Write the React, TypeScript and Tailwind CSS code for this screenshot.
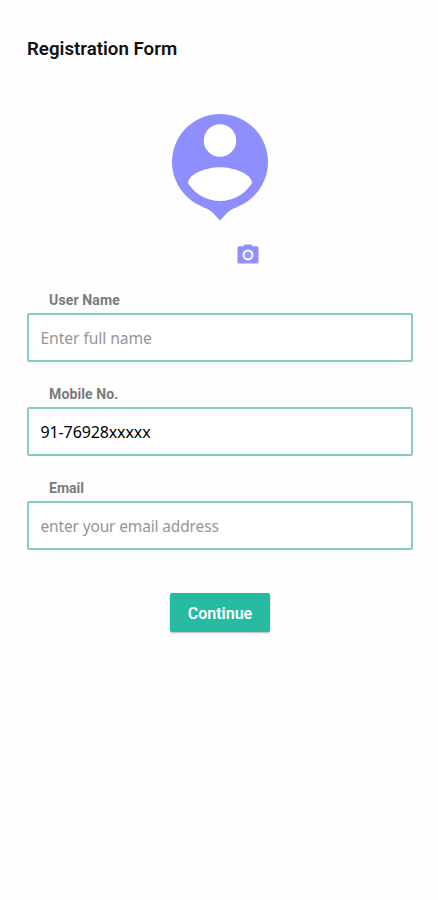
import React from "react";

function Avatar() {
  return (
    <svg className="h-[107px] w-[98px]" viewBox="0 0 98 107" aria-hidden="true">
      <circle cx="49" cy="48" r="48" fill="#8f8eff" />
      <path d="M30 92.5Q37.5 94.5 41.5 98.5L49 106.5L56.5 98.5Q60.500 94.5 68 92.500Z" fill="#8f8eff" />
      <circle cx="49" cy="26.5" r="16.2" fill="#fff" />
      <path d="M17 69C17.500 59 37 53.200 49 53.200S80.500 59 81 69C74 80.500 62 87 49 87S24 80.500 17 69Z" fill="#fff" />
    </svg>
  );
}

function Camera() {
  return (
    <svg className="h-5 w-[22px]" viewBox="0 0 22 20" aria-hidden="true">
      <path d="M8 .5h6l2 1.800h4a1.500 1.500 0 0 1 1.500 1.500v14.200a1.500 1.500 0 0 1-1.500 1.500H2a1.500 1.500 0 0 1-1.500-1.500V3.800a1.500 1.500 0 0 1 1.500-1.500h4Z" fill="#8f8eff" />
      <circle cx="11" cy="10.900" r="4.500" fill="#9a98fd" stroke="#fff" strokeWidth="2" />
    </svg>
  );
}

type FieldProps = {
  label: string;
  labelClass: string;
  inputClass: string;
  type?: string;
  placeholder?: string;
  value?: string;
};

function Field({ label, labelClass, inputClass, type = "text", placeholder, value }: FieldProps) {
  return (
    <label className="flex h-[94px] flex-col">
      <span className={`ml-[22px] h-6 self-start whitespace-nowrap font-[Roboto,sans-serif] text-sm leading-[22px] font-bold text-[#7a7a7a] ${labelClass}`}>
        {label}
      </span>
      <input
        type={type}
        placeholder={placeholder}
        defaultValue={value}
        className={`h-[49px] w-full rounded-[2px] border-2 border-[#85cdbb] bg-white px-[11.5px] font-['Noto_Sans',sans-serif] text-black outline-none placeholder:text-[#969696] ${inputClass}`}
      />
    </label>
  );
}

export default function App() {
  return (
    <main className="flex min-h-[900px] w-full flex-col bg-[#fefefe] pt-[37px] pr-[25px] pl-[27px] font-[Roboto,sans-serif]">
      <h1 className="h-6 text-[18.7px] leading-6 font-semibold text-[#111]">Registration Form</h1>
      <div className="mt-[53px] flex justify-center">
        <Avatar />
      </div>
      <div className="mt-[23px] ml-[210px] flex">
        <Camera />
      </div>
      <form className="mt-[25px] flex flex-col" onSubmit={(e) => e.preventDefault()}>
        <Field label="User Name" labelClass="tracking-[0.15px]" inputClass="text-[15.7px] tracking-[-0.1px]" placeholder="Enter full name" />
        <Field label="Mobile No." labelClass="tracking-[0.12px]" inputClass="text-base tracking-[-0.12px]" value="91-76928xxxxx" />
        <Field label="Email" labelClass="tracking-normal" inputClass="text-[15.5px] tracking-[-0.15px]" type="email" placeholder="enter your email address" />
        <button className="mt-[22px] h-[39px] w-[100px] self-center rounded-[2px] bg-[#27bba1] pt-0.5 text-base font-semibold text-white shadow-[0_1px_2px_rgba(0,0,0,0.3)]">
          Continue
        </button>
      </form>
    </main>
  );
}
